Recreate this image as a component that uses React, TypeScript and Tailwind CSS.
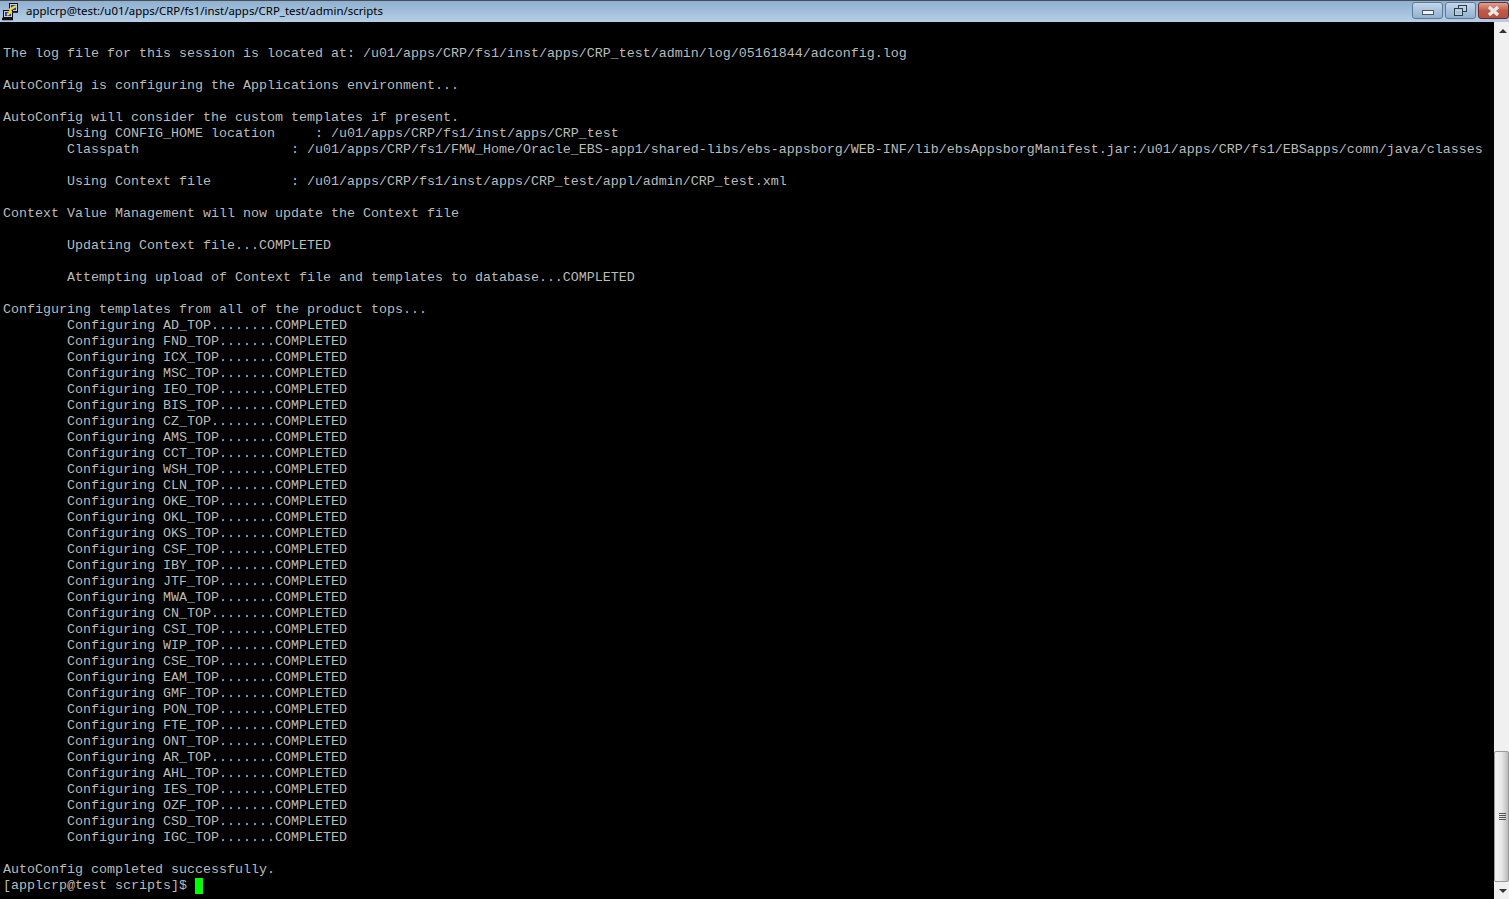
import React from "react";

const tops = [
  "AD_TOP........",
  "FND_TOP.......",
  "ICX_TOP.......",
  "MSC_TOP.......",
  "IEO_TOP.......",
  "BIS_TOP.......",
  "CZ_TOP........",
  "AMS_TOP.......",
  "CCT_TOP.......",
  "WSH_TOP.......",
  "CLN_TOP.......",
  "OKE_TOP.......",
  "OKL_TOP.......",
  "OKS_TOP.......",
  "CSF_TOP.......",
  "IBY_TOP.......",
  "JTF_TOP.......",
  "MWA_TOP.......",
  "CN_TOP........",
  "CSI_TOP.......",
  "WIP_TOP.......",
  "CSE_TOP.......",
  "EAM_TOP.......",
  "GMF_TOP.......",
  "PON_TOP.......",
  "FTE_TOP.......",
  "ONT_TOP.......",
  "AR_TOP........",
  "AHL_TOP.......",
  "IES_TOP.......",
  "OZF_TOP.......",
  "CSD_TOP.......",
  "IGC_TOP.......",
];

const lines = [
  "The log file for this session is located at: /u01/apps/CRP/fs1/inst/apps/CRP_test/admin/log/05161844/adconfig.log",
  "",
  "AutoConfig is configuring the Applications environment...",
  "",
  "AutoConfig will consider the custom templates if present.",
  "        Using CONFIG_HOME location     : /u01/apps/CRP/fs1/inst/apps/CRP_test",
  "        Classpath                   : /u01/apps/CRP/fs1/FMW_Home/Oracle_EBS-app1/shared-libs/ebs-appsborg/WEB-INF/lib/ebsAppsborgManifest.jar:/u01/apps/CRP/fs1/EBSapps/comn/java/classes",
  "",
  "        Using Context file          : /u01/apps/CRP/fs1/inst/apps/CRP_test/appl/admin/CRP_test.xml",
  "",
  "Context Value Management will now update the Context file",
  "",
  "        Updating Context file...COMPLETED",
  "",
  "        Attempting upload of Context file and templates to database...COMPLETED",
  "",
  "Configuring templates from all of the product tops...",
  ...tops.map((t) => `        Configuring ${t}COMPLETED`),
  "",
  "AutoConfig completed successfully.",
];

function PuttyIcon() {
  return (
    <svg width="18" height="19" viewBox="0 0 18 19" className="shrink-0">
      {/* back monitor */}
      <rect x="8.5" y="1.5" width="8" height="8" fill="#c8ccd8" stroke="#111" />
      <rect x="10" y="3" width="5" height="5" fill="#2438b8" />
      <path d="M9 10.5h8" stroke="#333" />
      {/* front monitor */}
      <rect x="2.5" y="8.5" width="9" height="7" fill="#c8ccd8" stroke="#111" />
      <rect x="4" y="10" width="6" height="4" fill="#2438b8" />
      <path d="M1 17h11" stroke="#111" strokeWidth="2.5" />
      {/* bolt */}
      <path d="M6 13 L10 10 L9 7.5 L15 4" stroke="#f6dc1e" strokeWidth="2.2" fill="none" />
    </svg>
  );
}

function TitleButton({ kind }: { kind: "min" | "max" | "close" }) {
  if (kind === "close") {
    return (
      <div className="flex h-[17px] w-[31px] items-center justify-center rounded-[3px] border border-[#6a2c34] bg-gradient-to-b from-[#dca393] via-[#c05a47] to-[#b5503f]">
        <svg width="13" height="10" viewBox="0 0 13 10">
          <path d="M2 1 L11 9 M11 1 L2 9" stroke="#e8e6e6" strokeWidth="3.5" />
        </svg>
      </div>
    );
  }
  return (
    <div className="flex h-[17px] w-[31px] items-center justify-center rounded-[3px] border border-[#5f7a96] bg-gradient-to-b from-[#c4d8ec] via-[#a9c3dc] to-[#94b2ce]">
      {kind === "min" ? (
        <div className="mt-[4px] h-[5px] w-[12px] border border-[#46586a] bg-[#f2f2f2]" />
      ) : (
        <svg width="13" height="11" viewBox="0 0 13 11">
          <rect x="4.5" y="0.5" width="8" height="6" fill="#bcd0e4" stroke="#2f3d4b" />
          <rect x="0.5" y="3.5" width="8" height="7" fill="#bcd0e4" stroke="#2f3d4b" />
          <rect x="2" y="6" width="5" height="3" fill="#a9c1d9" />
        </svg>
      )}
    </div>
  );
}

function Scrollbar() {
  return (
    <div className="flex w-[15px] shrink-0 flex-col bg-[#f0f0f0]">
      <div className="flex h-[17px] w-full items-center justify-center pl-[3px]">
        <div className="h-0 w-0 border-x-[4px] border-b-[4px] border-x-transparent border-b-[#333]" />
      </div>
      <div className="flex-1" />
      <div className="flex h-[131px] w-full items-center justify-center rounded-[2px] border border-[#999] bg-gradient-to-r from-[#f4f4f4] via-[#e8e8e8] to-[#bcbcbc] pl-[2px]">
        <div className="flex w-[7px] flex-col gap-[1px]">
          <div className="h-[1px] bg-[#555]" />
          <div className="h-[1px] bg-[#555]" />
          <div className="h-[1px] bg-[#555]" />
          <div className="h-[1px] bg-[#555]" />
        </div>
      </div>
      <div className="flex h-[17px] w-full items-center justify-center pl-[3px]">
        <div className="h-0 w-0 border-x-[4px] border-t-[4px] border-x-transparent border-t-[#333]" />
      </div>
    </div>
  );
}

export default function App() {
  return (
    <div className="flex h-[899px] w-[1509px] flex-col overflow-hidden bg-black">
      {/* Title bar */}
      <div className="flex h-[22px] shrink-0 items-center border-t border-[#4a4f55] bg-gradient-to-b from-[#8fb0d0] to-[#b6cfe7] pl-[1px]">
        <PuttyIcon />
        <span className="mb-[2px] ml-[7px] flex-1 font-['Noto_Sans',sans-serif] text-[11.43px] text-black">
          applcrp@test:/u01/apps/CRP/fs1/inst/apps/CRP_test/admin/scripts
        </span>
        <div className="flex gap-[2px] self-start pt-[1px]">
          <TitleButton kind="min" />
          <TitleButton kind="max" />
          <TitleButton kind="close" />
        </div>
      </div>

      <div className="flex min-h-0 flex-1">
        {/* Terminal */}
        <div className="min-w-0 flex-1 overflow-hidden pl-[3px] pt-[24px] font-['Liberation_Mono',monospace] text-[13.33px] leading-[16px] text-[#bbbbbb]">
          {lines.map((line, i) => (
            <div key={i} className="h-[16px] whitespace-pre">
              {line}
            </div>
          ))}
          <div className="flex h-[16px] whitespace-pre">
            <span>{"[applcrp@test scripts]$ "}</span>
            <span className="h-[16px] w-[8px] bg-[#00ff00]" />
          </div>
        </div>
        <Scrollbar />
      </div>
    </div>
  );
}
